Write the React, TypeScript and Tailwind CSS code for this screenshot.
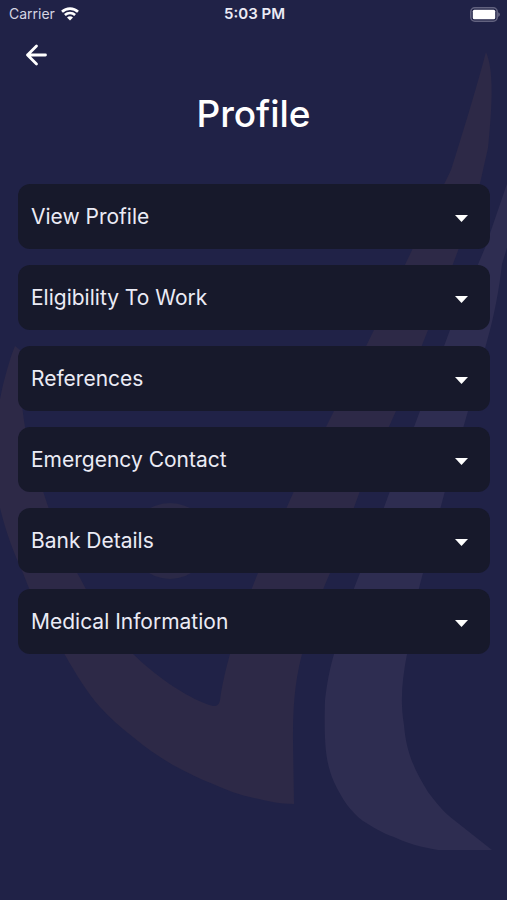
import React, { useState } from 'react';

interface ProfileSectionProps {
  title: string;
  open: boolean;
  onClick: () => void;
}

const sections: string[] = [
  'View Profile',
  'Eligibility To Work',
  'References',
  'Emergency Contact',
  'Bank Details',
  'Medical Information',
];

const WifiIcon: React.FC = () => (
  <svg className="h-[14px] w-[18px]" viewBox="0 0 18 14" fill="none" stroke="#fff" strokeWidth="2.6" aria-hidden="true">
    <path d="M1 4.8C5.4 0.5 12.6 0.5 17 4.8" />
    <path d="M3.9 8C6.8 5.3 11.2 5.3 14.1 8" />
    <path d="M6 10.4C7.8 8.9 10.2 8.9 12 10.4L9 13.4Z" fill="#fff" stroke="none" />
  </svg>
);

const BatteryIcon: React.FC = () => (
  <svg className="h-[15px] w-[30px]" viewBox="0 0 30 15" aria-label="Battery full" role="img">
    <rect x="0.8" y="0.8" width="26.4" height="13.4" rx="4" fill="none" stroke="#62627f" strokeWidth="1.6" />
    <rect x="2.8" y="2.8" width="22.4" height="9.4" rx="1.5" fill="#fff" />
    <path d="M28.3 5.2C30.2 6 30.2 9 28.3 9.8Z" fill="#777792" />
  </svg>
);

// Feathers and eye behind the content
const BackgroundArt: React.FC = () => (
  <svg
    className="absolute inset-0 h-full w-full"
    viewBox="0 0 507 900"
    preserveAspectRatio="xMidYMid slice"
    aria-hidden="true"
  >
    <path
      fill="#2d2947"
      d="M486 52C492 66 494 90 488 148L483 170C478 195 468 225 459 248L428 330L396 411L360 491L330 573C318 600 308 628 302 654C294 685 293 710 293 740L294 804C280 804 268 801 254 798C240 795 226 790 213 784C200 779 186 772 173 765C159 757 145 747 133 737C121 728 110 718 100 707C88 694 76 674 65 655C48 630 35 605 23 573C10 545 2 520 -4 490C-8 455 -4 415 3 385C7 370 10 358 15 346L20 350C19 370 20 395 25 427C29 455 35 475 43 491C52 520 65 552 80 578C95 607 112 634 133 654C158 678 190 700 213 706C218 706 219 704 220 700C222 685 226 668 230 654C238 625 247 600 258 573L294 491L334 411L374 330L413 248L451 170C462 135 476 90 486 52Z"
    />
    <ellipse cx="170" cy="541" rx="40" ry="38" fill="#2b2947" />
    <path
      fill="#2e2d51"
      d="M510 175V238L502 264C499 290 495 310 490 330L468 411L445 491L423 573C415 602 410 628 407 654C402 680 400 702 404 725C406 750 413 768 428 792C440 808 446 814 454 820L492 850H438C420 847 407 843 394 837C382 833 373 827 363 821C350 811 342 799 334 782C325 762 324 740 325 700C327 682 330 668 334 654C340 625 350 598 360 573L390 491L420 411L450 330L485 248Z"
    />
  </svg>
);

const ProfileSection: React.FC<ProfileSectionProps> = ({ title, open, onClick }) => (
  <button
    type="button"
    aria-expanded={open}
    onClick={onClick}
    className="flex h-[65px] w-full items-center justify-between rounded-xl bg-[#17192b] pl-[13px] pr-[22px] text-left text-[21px] text-[#ebebf5]"
  >
    {title}
    <svg className="mt-1 h-[7px] w-[13px]" viewBox="0 0 13 7" fill="#fff" aria-hidden="true">
      <path d="M0 0H13L6.5 7Z" />
    </svg>
  </button>
);

const App: React.FC = () => {
  const [openSection, setOpenSection] = useState<string | null>(null);

  return (
    <div className="relative min-h-screen overflow-hidden bg-[#202247] font-['Inter',sans-serif] text-white">
      <BackgroundArt />
      <div className="relative">
        <div className="grid h-7 grid-cols-3 items-center pl-[9px] pr-[7px] text-sm">
          <div className="flex items-center gap-1.5 text-[#d5d5e2]">
            Carrier
            <WifiIcon />
          </div>
          <div className="text-center text-[15px] font-semibold text-[#ebebf5]">5:03 PM</div>
          <div className="flex justify-end">
            <BatteryIcon />
          </div>
        </div>

        <header className="pt-2">
          <button type="button" aria-label="Back" className="ml-4 block p-2">
            <svg className="h-6 w-6" viewBox="0 0 24 24" fill="none" stroke="#fff" strokeWidth="2.8" strokeLinecap="round" strokeLinejoin="round" aria-hidden="true">
              <path d="M21.5 11H3.5M12.5 2L3.5 11L12.5 20" />
            </svg>
          </button>
          <h1 className="mt-4 text-center text-[37px] leading-[44px] font-medium">Profile</h1>
        </header>

        <main className="mt-12 flex flex-col gap-4 pb-8 pl-[18px] pr-[17px]">
          {sections.map((title) => (
            <ProfileSection
              key={title}
              title={title}
              open={openSection === title}
              onClick={() => setOpenSection(openSection === title ? null : title)}
            />
          ))}
        </main>
      </div>
    </div>
  );
};

export default App;
